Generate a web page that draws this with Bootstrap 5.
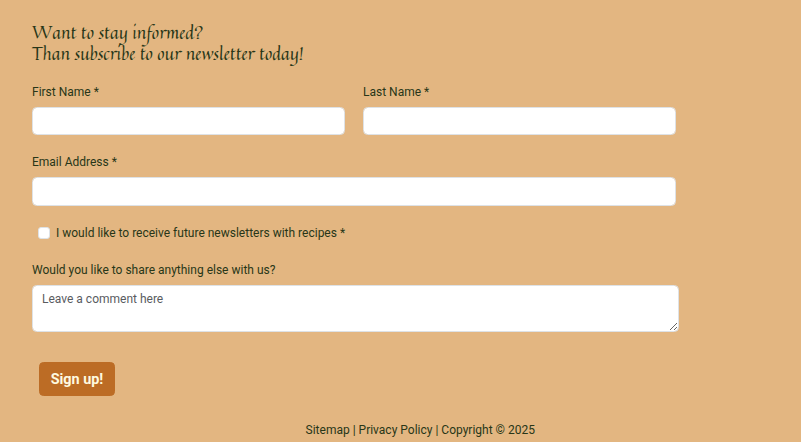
<!DOCTYPE html>
<html lang="en">
<head>
<meta charset="utf-8">
<meta name="viewport" content="width=device-width, initial-scale=1">
<title>Newsletter</title>
<link rel="stylesheet" href="https://cdn.jsdelivr.net/npm/bootstrap@5.3.0/dist/css/bootstrap.min.css">
<style>
html{font-size:12px}
body{font-family:Roboto,sans-serif;background:#e3b681;color:#283618;overflow:hidden}
.signup{padding:22px 0 0 32px;width:676px}
.headline{font-family:Quintessential,Charm,"Liberation Serif",serif;font-size:17.8px;line-height:21px;height:42px;margin-bottom:19px;font-weight:400}
.headline span{white-space:nowrap;display:block}
.form-label{line-height:18px;margin-bottom:6px;display:block}
.form-control{height:28px;border:1px solid #dee2e6;border-radius:4.5px;padding:4px 9px}
.email-row{margin-top:18px}
.email-row .form-control{height:29px}
textarea.form-control{width:647px;height:47px;min-height:47px}
.form-control::placeholder{color:#595c5f}
.form-check-input{width:12px;height:12px;margin:0;border:1px solid #dee2e6;border-radius:3px}
.agree{margin:18px 0 19px 6px;height:18px;gap:6px}
.btn-signup{--bs-btn-color:#fefae0;--bs-btn-bg:#bc6c25;--bs-btn-border-color:#bc6c25;--bs-btn-hover-color:#fefae0;--bs-btn-hover-bg:#a35c1e;width:76.5px;height:34px;padding:1px 0 0;font-size:14.4px;font-weight:700;border-radius:4.5px;margin:30.4px 0 0 6.7px}
.foot{margin-top:24.6px;padding-left:39.5px;line-height:18px}
.foot a{color:inherit;text-decoration:none}
</style>
<script src="https://cdn.jsdelivr.net/npm/bootstrap@5.3.0/dist/js/bootstrap.bundle.min.js"></script>
</head>
<body>
<form class="signup">
  <h1 class="headline"><span>Want to stay informed?</span><span>Than subscribe to our newsletter today!</span></h1>
  <div class="row">
    <div class="col-6"><label class="form-label" for="first">First Name *</label><input class="form-control" id="first" type="text"></div>
    <div class="col-6"><label class="form-label" for="last">Last Name *</label><input class="form-control" id="last" type="text"></div>
  </div>
  <div class="email-row"><label class="form-label" for="email">Email Address *</label><input class="form-control" id="email" type="email"></div>
  <div class="agree d-flex align-items-center"><input class="form-check-input" id="agree" type="checkbox"><label for="agree">I would like to receive future newsletters with recipes *</label></div>
  <label class="form-label" for="comment">Would you like to share anything else with us?</label>
  <textarea class="form-control" id="comment" placeholder="Leave a comment here"></textarea>
  <button class="btn btn-signup d-block" type="button">Sign up!</button>
</form>
<footer class="foot text-center"><a href="#">Sitemap</a> | <a href="#">Privacy Policy</a> | Copyright © 2025</footer>
</body>
</html>
